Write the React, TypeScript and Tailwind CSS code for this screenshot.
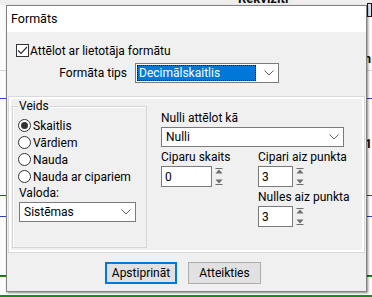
import React from "react";

const font = { fontFamily: 'Roboto, "Liberation Sans", Arial, sans-serif' };

const Chevron = () => (
  <svg width="10" height="6" viewBox="0 0 10 6" className="shrink-0">
    <path d="M0.5 0.5 L5 5 L9.5 0.5" fill="none" stroke="#606060" strokeWidth="1" />
  </svg>
);

const Select = ({ value, w, highlight }: { value: string; w: string; highlight?: boolean }) => (
  <div className={`${w} h-[20px] bg-white border border-[#7a7a7a] flex items-center pr-[4px] pl-[1px]`}>
    {highlight ? (
      <div className="flex-1 h-[16px] bg-[#0078d7] text-white flex items-center pl-[1px] border border-dotted border-black">
        {value}
      </div>
    ) : (
      <div className="flex-1 pl-[3px]">{value}</div>
    )}
    <div className={highlight ? "ml-[8px]" : ""}>
      <Chevron />
    </div>
  </div>
);

const Spin = () => (
  <div className="flex flex-col justify-between h-[21px] py-[2px] ml-[3px]">
    <svg width="8" height="6" viewBox="0 0 8 6">
      <rect x="0.5" y="0" width="7" height="1" fill="#6d6d6d" />
      <path d="M4 1.5 L7.5 5.5 L0.5 5.5 Z" fill="#6d6d6d" />
    </svg>
    <svg width="8" height="6" viewBox="0 0 8 6">
      <path d="M0.5 0.5 L7.5 0.5 L4 4.5 Z" fill="#6d6d6d" />
      <rect x="0.5" y="5" width="7" height="1" fill="#6d6d6d" />
    </svg>
  </div>
);

const NumBox = ({ value, w }: { value: string; w: string }) => (
  <div className="flex items-start mt-[1px]">
    <div className={`${w} h-[21px] bg-white border border-[#7a7a7a] flex items-center pl-[3px]`}>{value}</div>
    <Spin />
  </div>
);

const Radio = ({ label, checked }: { label: string; checked?: boolean }) => (
  <div className="h-[17px] flex items-center gap-[2px]">
    <div className="w-[13px] h-[13px] rounded-full border border-[#333] bg-white flex items-center justify-center">
      {checked && <div className="w-[7px] h-[7px] rounded-full bg-[#333]" />}
    </div>
    <span>{label}</span>
  </div>
);

export default function App() {
  return (
    <div className="relative w-[372px] h-[297px] overflow-hidden bg-white text-[12px] text-black" style={font}>
      {/* app behind the dialog */}
      <div className="absolute inset-0 bg-[#fbfbfb]">
        <div className="absolute left-0 right-0 top-0 h-[5px] bg-[#eeeeee]" />
        <div className="absolute left-[238px] -top-[11px] text-[13px] font-bold text-[#111]">Rekvizīti</div>
        <div className="absolute right-0 top-[3px] w-[5px] h-[14px] bg-[#cfe3f5] border border-[#3a0a0a]" />
        <div className="absolute left-0 right-0 top-[70px] h-px bg-[#d6d6d6]" />
        <div className="absolute left-0 right-0 top-[98px] h-px bg-[#2a3fc4]" />
        <div className="absolute left-0 right-0 top-[195px] h-px bg-[#2a3fc4]" />
        <div className="absolute left-0 right-0 top-[216px] h-px bg-[#2a3fc4]" />
        <div className="absolute left-0 right-0 top-[275px] h-px bg-[#2a3fc4]" />
        <div className="absolute left-0 right-0 top-[276px] h-px bg-[#1a8a1a]" />
        <div className="absolute left-0 right-0 top-[295px] h-[2px] bg-[#1a8a1a]" />
        <div className="absolute right-[1px] top-[50px] font-bold">n</div>
        <div className="absolute right-0 top-[135px] font-bold">1</div>
      </div>

      {/* dialog window */}
      <div className="absolute left-[6px] top-[5px] w-[361px] h-[287px] border border-[#828282] bg-[#f0f0f0] flex flex-col shadow-[1px_1px_2px_rgba(0,0,0,0.45)]">
        <div className="h-[26px] bg-white flex items-center pl-[4px] text-[12.5px]">Formāts</div>

        <div className="flex flex-col">
          <div className="mt-[12px] ml-[9px] h-[13px] flex items-center gap-[1px]">
            <div className="w-[13px] h-[13px] border border-[#333] bg-white flex items-center justify-center">
              <svg width="11" height="9" viewBox="0 0 11 9">
                <path d="M1 4.5 L4 7.5 L10 1" fill="none" stroke="#333" strokeWidth="1.2" />
              </svg>
            </div>
            <span>Attēlot ar lietotāja formātu</span>
          </div>

          <div className="mt-[6px] flex items-center gap-[8px]">
            <div className="w-[120px] text-right">Formāta tips</div>
            <Select value="Decimālskaitlis" w="w-[144px]" highlight />
          </div>

          <div className="mt-[14px] mx-[2px] h-[155px] border-2 border-white shadow-[0_0_0_1px_#d9d9d9] flex">
            <div className="relative mt-[7px] ml-[1px] w-[135px] h-[142px] border border-[#d5d5d5] shadow-[inset_1px_1px_0_#ffffff]">
              <div className="absolute -top-[8px] left-[5px] px-px bg-[#f0f0f0] leading-[14px]">Veids</div>
              <div className="flex flex-col pl-[5px] pt-[10px]">
                <Radio label="Skaitlis" checked />
                <Radio label="Vārdiem" />
                <Radio label="Nauda" />
                <Radio label="Nauda ar cipariem" />
                <div className="h-[16px] flex items-center pl-px">Valoda:</div>
                <div className="mt-[1px] pl-px">
                  <Select value="Sistēmas" w="w-[117px]" />
                </div>
              </div>
            </div>

            <div className="ml-[14px] pt-[11px] flex flex-col">
              <div className="h-[16px] flex items-center">Nulli attēlot kā</div>
              <div className="mt-[1px]">
                <Select value="Nulli" w="w-[183px]" />
              </div>
              <div className="flex mt-[2px]">
                <div className="w-[97px] flex flex-col">
                  <div className="h-[16px] flex items-center">Ciparu skaits</div>
                  <NumBox value="0" w="w-[51px]" />
                </div>
                <div className="flex flex-col">
                  <div className="h-[16px] flex items-center">Cipari aiz punkta</div>
                  <NumBox value="3" w="w-[35px]" />
                  <div className="h-[16px] flex items-center mt-[2px]">Nulles aiz punkta</div>
                  <NumBox value="3" w="w-[35px]" />
                </div>
              </div>
            </div>
          </div>

          <div className="mt-[10px] ml-[98px] flex gap-[11px]">
            <button className="w-[72px] h-[22px] bg-[#e1e1e1] border-2 border-[#0078d7] flex items-center justify-center">
              Apstiprināt
            </button>
            <button className="w-[73px] h-[22px] bg-[#e1e1e1] border border-[#adadad] flex items-center justify-center">
              Atteikties
            </button>
          </div>
        </div>
      </div>
    </div>
  );
}
